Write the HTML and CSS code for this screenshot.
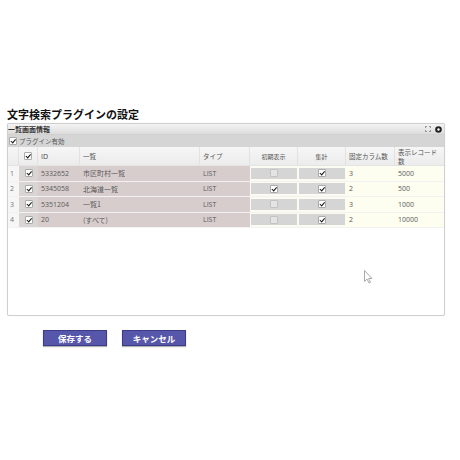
FILE: index.html
```html
<!DOCTYPE html>
<html lang="ja">
<head>
<meta charset="utf-8">
<link rel="stylesheet" href="styles.css">
</head>
<body>
<h1 class="title">文字検索プラグインの設定</h1>
<div class="panel">
  <div class="panel-head">
    <span class="panel-title">一覧画面情報</span>
    <span class="panel-icons">
      <svg class="ico" width="6" height="6" viewBox="0 0 6 6"><path d="M0 0h2v1H1v1H0zM4 0h2v2H5V1H4zM0 4h1v1h1v1H0zM5 4h1v2H4V5h1z" fill="#999"/></svg>
      <svg class="ico" width="7" height="7" viewBox="0 0 7 7"><circle cx="3.5" cy="3.5" r="3.3" fill="#222"/><circle cx="3.5" cy="3.5" r="1.2" fill="#fff"/></svg>
    </span>
  </div>
  <div class="toolbar"><span class="cb on"></span><span class="tb-label">プラグイン有効</span></div>
  <div class="grid">
    <div class="row head">
      <div class="c num"></div>
      <div class="c chk"><span class="cb on"></span></div>
      <div class="c id">ID</div>
      <div class="c list">一覧</div>
      <div class="c type">タイプ</div>
      <div class="c init center">初期表示</div>
      <div class="c agg center">集計</div>
      <div class="c fix">固定カラム数</div>
      <div class="c rec">表示レコード<br>数</div>
    </div>
    <div class="row">
      <div class="c num">1</div>
      <div class="c chk"><span class="cb on"></span></div>
      <div class="c id">5332652</div>
      <div class="c list">市区町村一覧</div>
      <div class="c type">LIST</div>
      <div class="c init"><span class="box"><span class="cb off"></span></span></div>
      <div class="c agg"><span class="box"><span class="cb on"></span></span></div>
      <div class="c fix">3</div>
      <div class="c rec">5000</div>
    </div>
    <div class="row">
      <div class="c num">2</div>
      <div class="c chk"><span class="cb on"></span></div>
      <div class="c id">5345058</div>
      <div class="c list">北海道一覧</div>
      <div class="c type">LIST</div>
      <div class="c init"><span class="box"><span class="cb on"></span></span></div>
      <div class="c agg"><span class="box"><span class="cb on"></span></span></div>
      <div class="c fix">2</div>
      <div class="c rec">500</div>
    </div>
    <div class="row">
      <div class="c num">3</div>
      <div class="c chk"><span class="cb on"></span></div>
      <div class="c id">5351204</div>
      <div class="c list">一覧1</div>
      <div class="c type">LIST</div>
      <div class="c init"><span class="box"><span class="cb off"></span></span></div>
      <div class="c agg"><span class="box"><span class="cb on"></span></span></div>
      <div class="c fix">3</div>
      <div class="c rec">1000</div>
    </div>
    <div class="row">
      <div class="c num">4</div>
      <div class="c chk"><span class="cb on"></span></div>
      <div class="c id">20</div>
      <div class="c list">(すべて)</div>
      <div class="c type">LIST</div>
      <div class="c init"><span class="box"><span class="cb off"></span></span></div>
      <div class="c agg"><span class="box"><span class="cb on"></span></span></div>
      <div class="c fix">2</div>
      <div class="c rec">10000</div>
    </div>
  </div>
</div>
<div class="actions">
  <button class="btn">保存する</button>
  <button class="btn">キャンセル</button>
</div>
<svg class="cursor" width="10" height="14" viewBox="0 0 10 14"><path d="M0.5 0.5V11.5L3 9L5 13L6.5 12.3L4.6 8.5H8Z" fill="#fff" stroke="#aaa" stroke-width="1"/></svg>
</body>
</html>
```
FILE: styles.css
```css
html, body {
  margin: 0;
  padding: 0;
  background: #fff;
}
body {
  padding-top: 107px;
  font-family: "Open Sans", "Noto Sans CJK JP", sans-serif;
  color: #333;
  position: relative;
  width: 460px;
  height: 460px;
  box-sizing: border-box;
}
.title {
  margin: 0 0 2px 7px;
  font-family: "Noto Sans CJK JP", sans-serif;
  font-size: 11px;
  line-height: 14px;
  font-weight: 700;
  color: #111;
}
.panel {
  margin-left: 7px;
  width: 438px;
  height: 193px;
  box-sizing: border-box;
  border: 1px solid #cfcfcf;
  border-radius: 2px;
  box-shadow: 0 0 1px rgba(0,0,0,0.15);
  overflow: hidden;
  background: #fff;
}
.panel-head {
  height: 10px;
  display: flex;
  align-items: center;
  justify-content: space-between;
  padding: 0 2px 0 0;
  background: linear-gradient(#f4f4f4, #dcdcdc);
  border-bottom: 1px solid #d0d0d0;
}
.panel-title {
  font-family: "Noto Sans CJK JP", sans-serif;
  font-size: 7px;
  font-weight: 700;
  color: #333;
  line-height: 10px;
}
.panel-icons {
  display: flex;
  align-items: center;
  gap: 4px;
}
.ico { display: block; }
.toolbar {
  height: 12px;
  display: flex;
  align-items: center;
  gap: 2px;
  padding-left: 1px;
  background: #d5d5d5;
}
.tb-label {
  font-family: "Noto Sans CJK JP", sans-serif;
  font-size: 6.5px;
  color: #555;
}
.grid {
  display: flex;
  flex-direction: column;
}
.row {
  display: flex;
  height: 15.5px;
  border-bottom: 1px solid #f2f2f2;
  box-sizing: border-box;
}
.row.head {
  height: 19px;
  background: linear-gradient(#f6f6f6, #ececec);
  border-bottom: 1px solid #e4e4e4;
}
.c {
  display: flex;
  align-items: center;
  box-sizing: border-box;
  padding-left: 3px;
  font-size: 7px;
  color: #5a5a5a;
  white-space: nowrap;
  font-family: "Open Sans", "Noto Sans CJK JP", sans-serif;
}
.head .c {
  color: #555;
  font-family: "Noto Sans CJK JP", sans-serif;
  font-size: 6px;
  border-right: 1px solid #e2e2e2;
}
.head .c.id { font-family: "Open Sans", sans-serif; font-size: 7px; color: #444; }
.head .c.list, .head .c.type { font-size: 6.5px; }
.center { justify-content: center; padding-left: 0; }
.num { width: 11px; padding-left: 2px; background: #f6f6f6; color: #777; }
.chk { width: 19px; justify-content: center; padding-left: 0; background: #d9d5d5; }
.id { width: 42px; background: #d8cdcd; }
.list { width: 120px; background: #d8cdcd; font-family: "Noto Sans CJK JP", sans-serif; }
.type { width: 50px; background: #d8cdcd; }
.init { width: 48px; background: #fbfbf2; padding: 1px 1px; }
.agg { width: 48px; background: #fbfbf2; padding: 1px 1px; }
.fix { width: 49px; background: #fdfdf0; }
.rec { width: 49px; background: #fdfdf0; }
.head .num, .head .chk, .head .id, .head .list, .head .type,
.head .init, .head .agg, .head .fix, .head .rec { background: transparent; }
.head .rec {
  display: block;
  line-height: 8.5px;
  font-size: 6.5px;
  padding-top: 1px;
  border-right: none;
}
.head .fix { font-size: 6.5px; }
.box {
  flex: 1;
  height: 11px;
  background: #d5d5d5;
  display: flex;
  align-items: center;
  justify-content: center;
}
.cb {
  position: relative;
  display: inline-block;
  width: 6px;
  height: 6px;
  border: 1px solid #b8b8b8;
  border-radius: 1px;
  background: #f4f4f4;
}
.cb.on { background: #fff; border-color: #aaa; }
.cb.off { background: #e4e4e4; border-color: #c2c2c2; }
.cb.on::after {
  content: "";
  position: absolute;
  left: 2px;
  top: 0;
  width: 1.5px;
  height: 3.5px;
  border: solid #111;
  border-width: 0 1.5px 1.5px 0;
  transform: rotate(40deg);
}
.actions {
  display: flex;
  gap: 15px;
  margin: 14px 0 0 43px;
}
.btn {
  width: 64px;
  height: 16px;
  padding: 0;
  border: 1px solid #3c3c86;
  background: #5656aa;
  color: #fff;
  font-family: "Noto Sans CJK JP", sans-serif;
  font-size: 8.5px;
  font-weight: 700;
  line-height: 14px;
  box-shadow: 0 1px 1px rgba(0,0,0,0.3);
}
.cursor {
  position: absolute;
  left: 364px;
  top: 270px;
}
```
